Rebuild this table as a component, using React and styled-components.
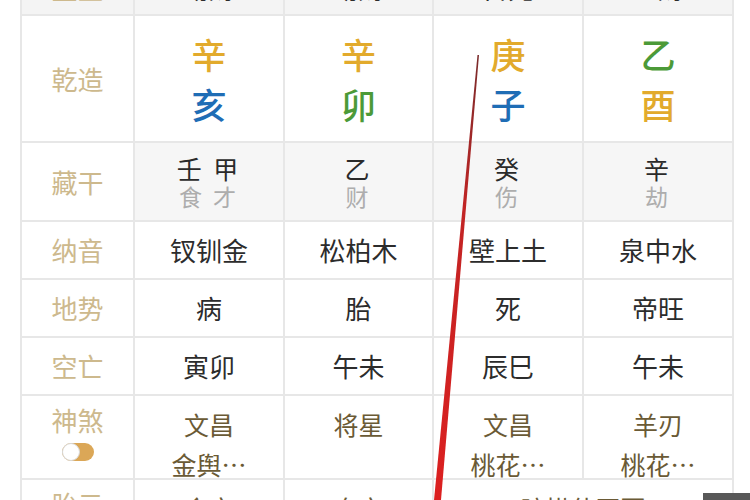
import React from "react";
import styled, { createGlobalStyle } from "styled-components";

const Global = createGlobalStyle`
  html, body {
    margin: 0;
    background: #fff;
    overflow: hidden;
  }
  body {
    font-family: "Noto Sans CJK SC", "Noto Sans", sans-serif;
  }
`;

const COLORS = {
  gold: "#e2aa2c",
  blue: "#1f6db5",
  green: "#4c9a38",
};

const pillars = [
  { stem: ["辛", "gold"], branch: ["亥", "blue"], hidden: "壬 甲", gods: "食 才", nayin: "钗钏金", dishi: "病", kong: "寅卯", sha: ["文昌", "金舆…"] },
  { stem: ["辛", "gold"], branch: ["卯", "green"], hidden: "乙", gods: "财", nayin: "松柏木", dishi: "胎", kong: "午未", sha: ["将星"] },
  { stem: ["庚", "gold"], branch: ["子", "blue"], hidden: "癸", gods: "伤", nayin: "壁上土", dishi: "死", kong: "辰巳", sha: ["文昌", "桃花…"] },
  { stem: ["乙", "green"], branch: ["酉", "gold"], hidden: "辛", gods: "劫", nayin: "泉中水", dishi: "帝旺", kong: "午未", sha: ["羊刃", "桃花…"] },
];

const Page = styled.div`
  position: relative;
  width: 750px;
  height: 500px;
  overflow: hidden;
`;

const Chart = styled.div`
  margin: -38px 0 0 20px;
  width: 714px;
  display: grid;
  grid-template-columns: 111px 148px 147px 148px 148px;
  grid-template-rows: 52px 125px 77px 56px 56px 56px 82px 60px;
  gap: 2px;
  padding: 0 2px;
  box-sizing: border-box;
  background: #e7e7e7;
`;

const Cell = styled.div`
  background: ${(p) => p.$bg || "#fff"};
  display: flex;
  flex-direction: column;
  align-items: center;
  justify-content: ${(p) => p.$top ? "flex-start" : "center"};
  padding-top: ${(p) => p.$top ? "8px" : "0"};
  box-sizing: border-box;
  grid-column: ${(p) => p.$span ? `span ${p.$span}` : "auto"};
  font-size: 26px;
  color: #2c2c2c;
  line-height: 1.2;
`;

const Label = styled(Cell)`
  color: #cdb98d;
  font-size: 26px;
`;

const Pillar = styled.span`
  font-size: 35px;
  font-weight: 500;
  line-height: 50px;
  color: ${(p) => COLORS[p.$c]};
`;

const Hidden = styled.span`
  font-size: 25px;
  line-height: 28px;
  letter-spacing: 3px;
  color: #2a2a2a;
`;

const God = styled.span`
  font-size: 23px;
  line-height: 28px;
  letter-spacing: 3px;
  color: #adadad;
`;

const Sha = styled.span`
  font-size: 25px;
  line-height: 40px;
  color: #6a5a35;
`;

const Toggle = styled.span`
  margin-top: 8px;
  width: 32px;
  height: 18px;
  border-radius: 9px;
  background: #dba757;
  position: relative;
  &::before {
    content: "";
    position: absolute;
    left: 0;
    top: 0;
    width: 16px;
    height: 16px;
    border-radius: 50%;
    background: #fff;
    border: 1px solid #d8d8d8;
  }
`;

const Stroke = styled.svg`
  position: absolute;
  left: 0;
  top: 0;
  pointer-events: none;
`;

const Corner = styled.div`
  position: absolute;
  right: 0;
  bottom: 0;
  width: 47px;
  height: 7px;
  background: #585858;
`;

export default function App() {
  return (
    <Page>
      <Global />
      <Chart>
        <Label $bg="#f4f4f4">主星</Label>
        <Cell $bg="#f4f4f4">劫财</Cell>
        <Cell $bg="#f4f4f4">劫财</Cell>
        <Cell $bg="#f4f4f4">日元</Cell>
        <Cell $bg="#f4f4f4">正财</Cell>

        <Label>乾造</Label>
        {pillars.map((p, i) => (
          <Cell key={i}>
            <Pillar $c={p.stem[1]}>{p.stem[0]}</Pillar>
            <Pillar $c={p.branch[1]}>{p.branch[0]}</Pillar>
          </Cell>
        ))}

        <Label>藏干</Label>
        {pillars.map((p, i) => (
          <Cell key={i} $bg="#f6f6f6">
            <Hidden>{p.hidden}</Hidden>
            <God>{p.gods}</God>
          </Cell>
        ))}

        <Label>纳音</Label>
        {pillars.map((p, i) => <Cell key={i}>{p.nayin}</Cell>)}

        <Label>地势</Label>
        {pillars.map((p, i) => <Cell key={i}>{p.dishi}</Cell>)}

        <Label>空亡</Label>
        {pillars.map((p, i) => <Cell key={i}>{p.kong}</Cell>)}

        <Label $top>
          神煞
          <Toggle />
        </Label>
        {pillars.map((p, i) => (
          <Cell key={i} $top>
            {p.sha.map((s) => <Sha key={s}>{s}</Sha>)}
          </Cell>
        ))}

        <Label $top>胎元</Label>
        <Cell $top><Sha>命宫</Sha></Cell>
        <Cell $top><Sha>身宫</Sha></Cell>
        <Cell $top $span={2}><Sha>暗拱什同票</Sha></Cell>
      </Chart>
      <Stroke width="750" height="500" viewBox="0 0 750 500">
        <defs>
          <linearGradient id="pen" x1="0" y1="0" x2="0" y2="1">
            <stop offset="0" stopColor="#7a2b2b" />
            <stop offset="0.35" stopColor="#c22424" />
            <stop offset="1" stopColor="#dc2020" />
          </linearGradient>
        </defs>
        <polygon points="477.5,55 479,55 441,500 434,500" fill="url(#pen)" />
      </Stroke>
      <Corner />
    </Page>
  );
}
